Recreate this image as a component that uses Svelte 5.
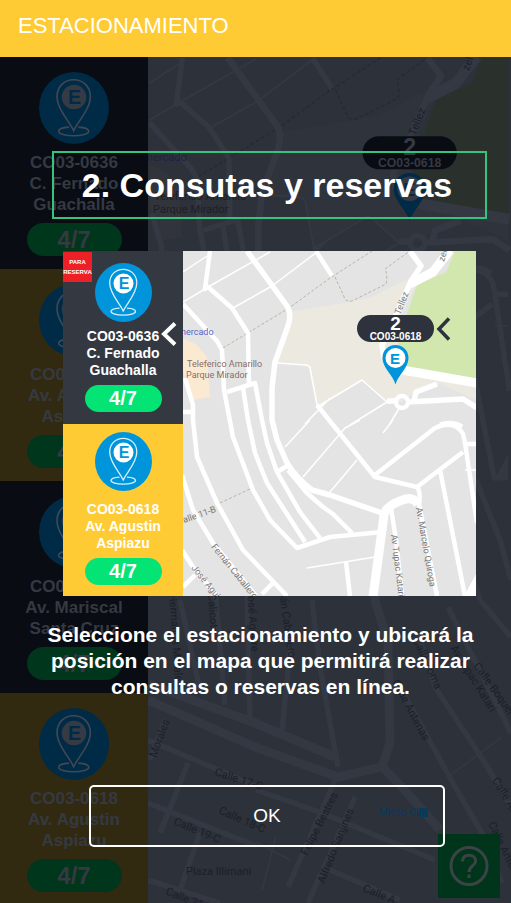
<script>
  const lots = [
    { code: 'CO03-0636', street: ['C. Fernado', 'Guachalla'], free: '4/7', tone: 'dark' },
    { code: 'CO03-0618', street: ['Av. Agustin', 'Aspiazu'], free: '4/7', tone: 'gold' },
    { code: 'CO03-0618', street: ['Av. Mariscal', 'Santa Cruz'], free: '4/7', tone: 'dark' },
    { code: 'CO03-0618', street: ['Av. Agustin', 'Aspiazu'], free: '4/7', tone: 'gold' }
  ];
  const tips = lots.slice(0, 2);

  const lowerLabels = [
    { t: 'Hermanos Morales', x: 169, y: 594, r: 86 },
    { t: 'Calicoto', x: 208, y: 594, r: 86 },
    { t: 'José Aguirre', x: 247, y: 590, r: 86 },
    { t: 'Fernán Caballero', x: 277, y: 576, r: 82 },
    { t: 'Morales', x: 156, y: 758, r: -70 },
    { t: 'Calle 17-C', x: 214, y: 775, r: 18 },
    { t: 'Calle 18-C', x: 218, y: 813, r: 24 },
    { t: 'Calle 19-C', x: 173, y: 824, r: 23 },
    { t: 'Calle 21', x: 165, y: 894, r: 22 },
    { t: 'Plaza Illimani', x: 186, y: 875, r: 0 },
    { t: 'Felipe Bestres', x: 307, y: 856, r: -63 },
    { t: 'Alfredo Sanjines', x: 324, y: 884, r: -68 },
    { t: 'Calle A', x: 362, y: 891, r: 22 },
    { t: 'Calle Antenas', x: 392, y: 682, r: 62 },
    { t: 'Calle Toma', x: 413, y: 640, r: 66 },
    { t: 'Av Tupac Katari', x: 450, y: 648, r: 58 },
    { t: 'Calle Boquerón', x: 473, y: 666, r: 54 },
    { t: 'Calle A.', x: 492, y: 780, r: 60 },
    { t: 'Calle Antenas', x: 488, y: 824, r: 64 }
  ];
</script>

{#snippet badge()}
  <svg class="badge" viewBox="0 0 57 59" preserveAspectRatio="none" aria-hidden="true">
    <ellipse class="disc" cx="28.5" cy="29.5" rx="28.5" ry="29.5" />
    <g class="outline">
      <path d="M24.5 45.2C18.500 45.600 16 47 16 48.500C16 50.600 21.500 52.200 28.200 52.200C35 52.200 40.500 50.600 40.500 48.500C40.500 47 38 45.600 32 45.200" />
      <path d="M28.200 48C24.500 40 14.700 30.500 14.700 20C14.700 12 20.600 6.300 28.200 6.300C35.800 6.300 41.800 12 41.800 20C41.800 30.500 32 40 28.200 48Z" />
    </g>
    <circle class="hub" cx="28.500" cy="20.500" r="10" />
    <text class="letter" x="29" y="26" text-anchor="middle">E</text>
  </svg>
{/snippet}

{#snippet card(lot)}
  {@render badge()}
  <p class="name">{lot.code}<br />{lot.street[0]}<br />{lot.street[1]}</p>
  <span class="free">{lot.free}</span>
{/snippet}

{#snippet district()}
  <rect class="land" x="183" y="251" width="293" height="345" />
  <path class="sand" d="M289 320L287 312L332 305L370 298L405 280L416 284L404 310L397 341L400 366L420 371L450 373L476 384V400L440 384L416 391L402 402L387 402L362 380L317 407L308 367L277 363Z" />
  <path class="park" d="M455 251L446 272L417 285L410 305L398 341L404 365L420 371L476 379V251Z" />
  <path class="station" d="M183 338L197 345L207 357L210 397L192 400L183 370Z" />
  <path class="path" d="M223 348L289 308L330 278L372 251M335 277L345 299Q348 303 354 300L386 284Q388 277 385 269L400 258L410 251" />
  <path class="path" d="M220 503L252 488" />
  <path class="road thin" d="M183 272L207 256M208 287L270 252M183 302L205 289M233 308L272 286L317 252M277 363L307 365L310 367L317 405M305 424L330 398M317 407L362 380L387 402L350 425M400 407L389 425M285 447L310 420M303 477L345 428L360 420M330 492L357 460M383 433L393 420M307 568L375 557M465 470H476" />
  <path class="road" d="M210 251L205 289L208 287L232 308L248 333L249 385M183 304L217 341L222 350L224 390L233 437L253 490L270 520L297 548L330 537L382 532" />
  <path class="road wide" d="M247 251L271 284L287 306Q292 314 288 326L275 362L272 388L272 420L277 440L287 463Q296 478 312 490L330 495L382 513" />
  <path class="road" d="M227 392L255 383L262 420L267 443L277 472L300 512L320 538M243 388L248 420L255 453L267 483L305 542M277 472L287 466M288 470L307 493L323 507L333 514L352 533" />
  <path class="road" d="M185 378L193 405L193 420L197 457L217 503L243 550L287 596M182 475L193 510L213 543L256 596M182 550L193 567L217 596M183 587L195 575M262 594L273 583M183 412H193" />
  <path class="road" d="M316 251L332 276M317 405L375 477L417 487L463 452M375 475L435 428Q455 419 463 434L465 443L477 523M465 444H476M440 470L465 596M346 562L350 596M391 508L396 540L402 596M417 487Q421 492 419 504L437 596" />
  <path class="road broad" d="M373 597L384 515Q386 506 400 501Q412 495 418 504" />
  <path class="road wide" d="M410 251L421 266L411 281L396 315L382 345L384 358M387 401H396M408 402L463 399L477 408M414 401L416 392L437 384M440 425Q452 421 462 427" />
  <path class="road broad" d="M410 284L433 272L450 250M402 370L420 373L477 383" />
  <circle class="road" cx="402" cy="402" r="6" />
  <path class="wedge" d="M464 596L476 574V596Z" />
  <g class="streets">
    <text transform="translate(400 315) rotate(-68)">Tellez</text>
    <text transform="translate(444 262) rotate(-72)">zelleT</text>
    <text transform="translate(184 523) rotate(-19)">alle 11-B</text>
    <text transform="translate(211 547) rotate(51)">Fernán Caballero</text>
    <text transform="translate(191 568) rotate(51)">José Aguirre</text>
    <text transform="translate(416 508) rotate(80)">Av. Marcelo Quiroga</text>
    <text transform="translate(391 535) rotate(83)">Av Tupac Katari</text>
  </g>
  <text class="market" x="181" y="335">nercado</text>
  <g class="stop">
    <text x="187" y="367">Teleferico Amarillo</text>
    <text x="186" y="378">Parque Mirador</text>
  </g>
  <g class="marker">
    <rect class="capsule" x="357" y="315" width="77" height="27" rx="13.500" />
    <text class="count" x="395.500" y="330" text-anchor="middle">2</text>
    <text class="code" x="395.500" y="340" text-anchor="middle">CO03-0618</text>
    <path class="drop" d="M395.500 384.500C393 375 382.500 368 382.500 358C382.500 350.500 388 345 395.500 345C403 345 408.500 350.500 408.500 358C408.500 368 398 375 395.500 384.500Z" />
    <circle class="eye" cx="395.500" cy="358" r="10" />
    <text class="mark" x="395" y="363.500" text-anchor="middle">E</text>
  </g>
{/snippet}

<div class="screen">
  <header><h1>ESTACIONAMIENTO</h1></header>

  <main>
    <div class="backdrop">
      <ul class="lots">
        {#each lots as lot}
          <li class={lot.tone}>{@render card(lot)}</li>
        {/each}
      </ul>
      <svg class="city" viewBox="148 57 363 846" preserveAspectRatio="xMidYMin slice" aria-label="Mapa">
        <rect class="land" x="148" y="57" width="363" height="846" />
        <g transform="translate(-74.850 -249.700) scale(1.225)">
          {@render district()}
        </g>
        <path class="road wide" d="M148 740L256 786M148 803L256 846M188 763L160 833M200 833L180 890M165 720L150 760M148 880L220 903M256 790L322 813L435 860M312 600L320 667L338 767M292 633L282 730M335 780L288 887M355 797L308 903M330 870L400 900M180 600L200 690M215 590L225 705M247 590L250 720" />
        <path class="road wide" d="M398 683L455 787L482 833L502 883M418 633L435 687L485 763L511 807M448 607L511 733M480 600L511 637M476 480L500 540L511 580M440 480L480 600" />
        <path class="road broad" d="M148 684L255 723L335 757M148 700L255 747L338 777L382 767L390 743L388 643L375 600V480M382 767L402 787L440 830" />
        <path class="road thin" d="M448 777L502 737M256 842L290 860M262 890L276 836" />
        <g class="streets">
          {#each lowerLabels as l}
            <text transform="translate({l.x} {l.y}) rotate({l.r})">{l.t}</text>
          {/each}
        </g>
        <text class="micro" x="378" y="816">Micro CH</text>
        <rect class="bus" x="419" y="808" width="9" height="9" rx="1" />
        <path class="busglass" d="M421 811H426M421 815H422.500M424.500 815H426" />
      </svg>
      <button class="help" aria-label="Ayuda">
        <svg viewBox="0 0 40 42" aria-hidden="true">
          <ellipse cx="20" cy="21" rx="18" ry="18.500" />
          <path d="M13.500 16.500C13.500 12.500 16 10.200 20 10.200C24 10.200 26.700 12.700 26.700 16C26.700 20.500 20 21 20 27" />
          <path d="M20 29.500V33" />
        </svg>
      </button>
    </div>

    <section class="guide" role="dialog" aria-labelledby="guide-title">
      <h2 id="guide-title">2. Consutas y reservas</h2>
      <div class="preview">
        <ul class="lots">
          {#each tips as lot, i}
            <li class={lot.tone}>
              {@render card(lot)}
              {#if i === 0}
                <span class="tag">PARA<br />RESERVA</span>
                <svg class="chevron" viewBox="0 0 16 26" aria-hidden="true"><path d="M14 2.500L3 13L14 23.500" /></svg>
              {/if}
            </li>
          {/each}
        </ul>
        <svg class="zone" viewBox="183 251 293 345" preserveAspectRatio="xMidYMid slice" aria-label="Mapa de ejemplo">
          {@render district()}
          <path class="pointer" d="M449 318.500L439 329L449 339.500" />
        </svg>
      </div>
      <p class="help-text">Seleccione el estacionamiento y ubicará la<br />posición en el mapa que permitirá realizar<br />consultas o reservas en línea.</p>
      <button class="ok">OK</button>
    </section>
  </main>
</div>

<style>
  :global(body) { margin: 0; }
  .screen {
    display: flex;
    flex-direction: column;
    min-height: 100vh;
    font-family: "Liberation Sans", Arial, sans-serif;
    color: #fff;
    background: #2d323b;
  }
  header {
    display: flex;
    align-items: center;
    height: 57px;
    padding: 0 18px;
    background: #ffcb34;
    box-sizing: border-box;
  }
  h1 { margin: 0 0 5px; font-size: 22px; line-height: 24px; font-weight: 400; }
  main { position: relative; flex: 1; display: flex; }
  p, h2, ul { margin: 0; padding: 0; }
  ul { list-style: none; }
  button { font: inherit; color: inherit; padding: 0; cursor: pointer; }

  .backdrop {
    --dark: #090c13;
    --gold: #322a10;
    --blue: #002b46;
    --ink: #353942;
    --line: #414854;
    --green: #00361c;
    --land: #2d313a;
    --sand: #2f333b;
    --park: #2a312d;
    --station: #32343b;
    --road: #333842;
    --dash: #242932;
    --label: #1b2029;
    --market: #202344;
    --stop: #1d1f27;
    --capsule: #090c13;
    --hub: #353a45;
    position: absolute;
    inset: 0;
    display: flex;
    overflow: hidden;
  }
  .preview {
    --dark: #343841;
    --gold: #ffcb34;
    --blue: #0095da;
    --ink: #fff;
    --line: #d9f0fb;
    --green: #04e474;
    --land: #e4e4e4;
    --sand: #ece9e1;
    --park: #d2e7ad;
    --station: #fbe9d2;
    --road: #fff;
    --dash: #b9b5a3;
    --label: #777;
    --market: #5866c8;
    --stop: #8b6e63;
    --capsule: #2d323c;
    --hub: #fff;
    display: flex;
    margin: 32px 11px 0;
  }

  .lots { flex: none; width: 148px; }
  .lots li {
    position: relative;
    display: flex;
    flex-direction: column;
    align-items: center;
    height: 212px;
    padding-top: 15px;
    box-sizing: border-box;
    color: var(--ink);
    font-weight: 700;
    text-align: center;
  }
  .dark { background: var(--dark); }
  .gold { background: var(--gold); }
  .badge { width: 70px; height: 72px; flex: none; }
  .name { margin: 8px 0; font-size: 17px; line-height: 21px; }
  .free {
    width: 95px;
    border-radius: 17px;
    background: var(--green);
    font-size: 24px;
    line-height: 33px;
  }
  .preview .lots { width: 120px; }
  .preview li { height: 173px; padding-top: 12px; }
  .preview .gold { height: 172px; padding-top: 8px; }
  .preview .badge { width: 57px; height: 59px; }
  .preview .name { margin: 6px 0; font-size: 14px; line-height: 17px; }
  .preview .gold .name { margin-top: 10px; }
  .preview .free { width: 77px; font-size: 20px; line-height: 27px; }

  .disc { fill: var(--blue); }
  .outline { fill: none; stroke: var(--line); stroke-width: 1.3; }
  .hub { fill: var(--hub); }
  .letter { fill: var(--blue); font-size: 16px; font-weight: 700; }

  .tag {
    position: absolute;
    top: 1px;
    left: 0;
    width: 29px;
    padding: 5px 0;
    background: #ee2027;
    color: #fff;
    font-size: 6px;
    line-height: 10px;
  }
  .chevron { position: absolute; right: 6px; top: 70px; width: 16px; height: 26px; fill: none; stroke: #fff; stroke-width: 4; }

  .city, .zone { display: block; flex: 1; min-width: 0; }
  .city { height: 100%; }
  .zone { height: 345px; }
  .land { fill: var(--land); }
  .sand { fill: var(--sand); }
  .park { fill: var(--park); }
  .station { fill: var(--station); }
  .wedge { fill: var(--road); }
  .road { fill: none; stroke: var(--road); stroke-width: 4.5; stroke-linejoin: round; }
  .road.wide { stroke-width: 5.5; }
  .road.broad { stroke-width: 9; }
  .road.thin { stroke-width: 1.5; }
  .path { fill: none; stroke: var(--dash); stroke-width: 1; stroke-dasharray: 3 2; }
  .streets, .market, .stop, .micro { font-family: Roboto, sans-serif; font-size: 9px; }
  .streets { fill: var(--label); }
  .city > .streets, .micro { font-size: 11px; }
  .market { fill: var(--market); }
  .stop { fill: var(--stop); }
  .micro, .bus { fill: #063b5c; }
  .busglass { fill: none; stroke: #2d323b; }
  .marker { font-weight: 700; fill: var(--ink); }
  .capsule { fill: var(--capsule); }
  .count { font-size: 19px; }
  .code { font-size: 10px; }
  .drop, .mark { fill: var(--blue); }
  .eye { fill: var(--hub); }
  .mark { font-size: 15px; }
  .pointer { fill: none; stroke: #2d323c; stroke-width: 3.5; }

  .help {
    position: absolute;
    right: 11px;
    bottom: 5px;
    width: 62px;
    height: 64px;
    display: grid;
    place-items: center;
    border: 0;
    background: #01351b;
  }
  .help svg { width: 40px; height: 42px; fill: none; stroke: #3a4346; stroke-width: 3; }

  .guide {
    position: relative;
    flex: 1;
    min-width: 0;
    padding: 94px 24px 56px 52px;
    display: flex;
    flex-direction: column;
  }
  h2 {
    padding-right: 5px;
    border: 2px solid #35c37e;
    font-size: 34px;
    line-height: 64px;
    text-align: center;
    white-space: nowrap;
  }
  .help-text {
    margin: 26px 8px 0 -10px;
    font-size: 21px;
    line-height: 26px;
    font-weight: 700;
    text-align: center;
  }
  .ok {
    margin: 85px 42px 0 37px;
    height: 62px;
    border: 2px solid #fff;
    border-radius: 5px;
    background: none;
    font-size: 19px;
  }
</style>
